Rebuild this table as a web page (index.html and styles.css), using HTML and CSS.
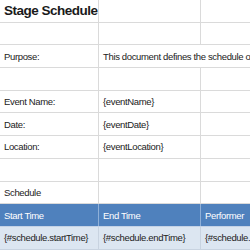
FILE: index.html
```html
<!DOCTYPE html>
<html>
<head>
<meta charset="utf-8">
<link rel="stylesheet" href="styles.css">
</head>
<body>
<div class="sheet">
  <div class="row"><div class="cell title">Stage Schedule</div><div class="cell"></div><div class="cell"></div></div>
  <div class="row"><div class="cell"></div><div class="cell"></div><div class="cell"></div></div>
  <div class="row"><div class="cell">Purpose:</div><div class="cell span">This document defines the schedule of the stage performances.</div></div>
  <div class="row"><div class="cell"></div><div class="cell"></div><div class="cell"></div></div>
  <div class="row"><div class="cell">Event Name:</div><div class="cell">{eventName}</div><div class="cell"></div></div>
  <div class="row"><div class="cell">Date:</div><div class="cell">{eventDate}</div><div class="cell"></div></div>
  <div class="row"><div class="cell">Location:</div><div class="cell">{eventLocation}</div><div class="cell"></div></div>
  <div class="row"><div class="cell"></div><div class="cell"></div><div class="cell"></div></div>
  <div class="row"><div class="cell">Schedule</div><div class="cell"></div><div class="cell"></div></div>
  <div class="row head"><div class="cell">Start Time</div><div class="cell">End Time</div><div class="cell">Performer</div></div>
  <div class="row data"><div class="cell">{#schedule.startTime}</div><div class="cell">{#schedule.endTime}</div><div class="cell">{#schedule.performer}</div></div>
</div>
</body>
</html>
```
FILE: styles.css
```css
html, body {
  margin: 0;
  padding: 0;
  background: #ffffff;
  overflow: hidden;
}
.sheet {
  width: 250px;
  overflow: hidden;
  font-family: "Liberation Sans", Arial, sans-serif;
  font-size: 9.5px;
  letter-spacing: -0.35px;
  color: #222222;
}
.row {
  display: grid;
  grid-template-columns: 99px 102px 200px;
  height: 22.7px;
  box-sizing: border-box;
  border-bottom: 1px solid #dadada;
}
.cell {
  box-sizing: border-box;
  border-right: 1px solid #dadada;
  padding-left: 4px;
  display: flex;
  align-items: center;
  white-space: nowrap;
  overflow: hidden;
}
.cell.span {
  grid-column: 2 / 4;
  overflow: visible;
}
.title {
  font-weight: bold;
  font-size: 13.5px;
  letter-spacing: -0.5px;
  color: #1a1a1a;
}
.head {
  background: #4f81bd;
  color: #ffffff;
  border-bottom-color: #c4d2e6;
}
.head .cell {
  border-right-color: #8fb0d8;
}
.data {
  background: #dce6f1;
  border-bottom-color: #c8d3e0;
}
.data .cell {
  border-right-color: #c8d3e0;
}
```
